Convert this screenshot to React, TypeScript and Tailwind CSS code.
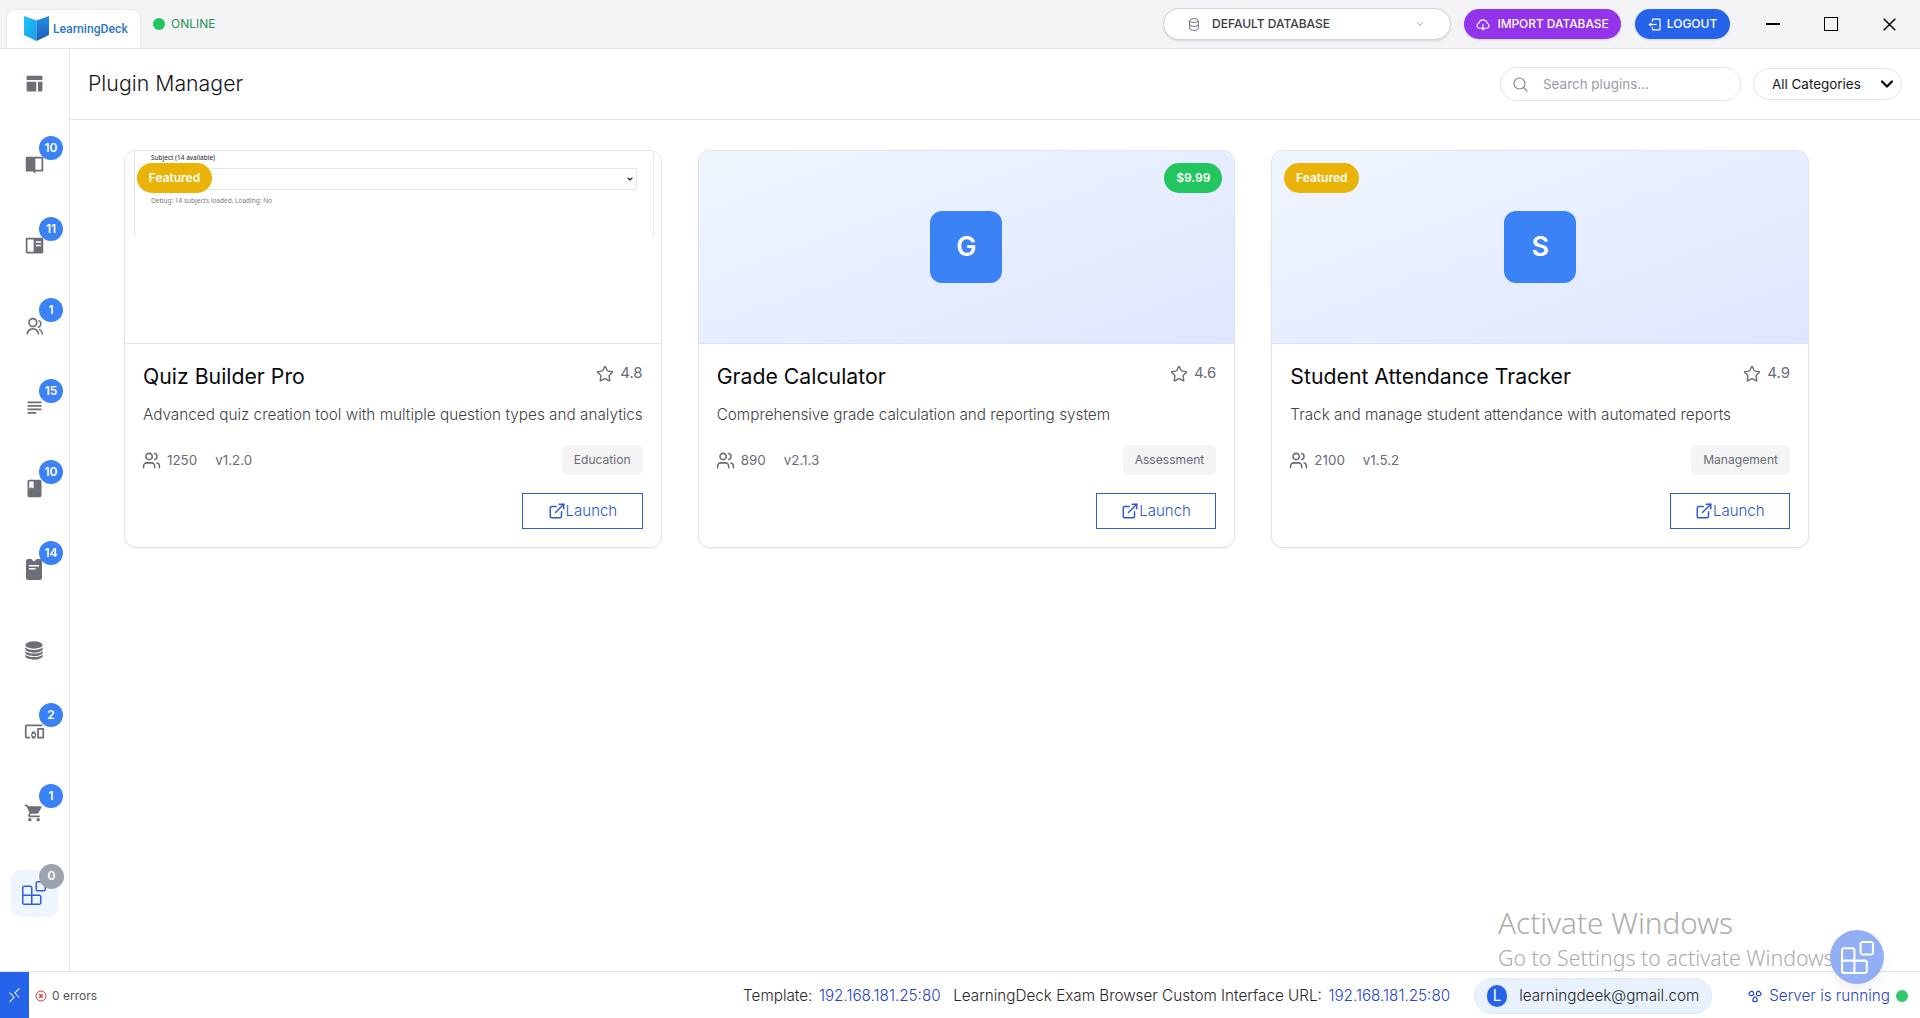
import type { ReactNode } from "react";
import { ChevronDown, ExternalLink, Star, Users } from "lucide-react";
import { RiGroupLine, RiLayoutFill } from "react-icons/ri";
import { MdClass, MdDevicesOther, MdShoppingCart, MdSubject } from "react-icons/md";
import { VscExtensions, VscRemote } from "react-icons/vsc";

function BookIcon() {
  return (
    <svg width="21" height="21" viewBox="0 0 24 24" fill="currentColor">
      <path d="M3 3h18a1 1 0 0 1 1 1v15a1 1 0 0 1-1 1h-7.500L12 22l-1.500-2H3a1 1 0 0 1-1-1V4a1 1 0 0 1 1-1zm10 2v13h7V5z" />
    </svg>
  );
}

function ReaderIcon() {
  return (
    <svg width="21" height="21" viewBox="0 0 24 24" fill="currentColor">
      <path
        fillRule="evenodd"
        d="M3.500 3h17A1.500 1.500 0 0 1 22 4.500v15a1.500 1.500 0 0 1-1.500 1.500h-17A1.500 1.500 0 0 1 2 19.500v-15A1.500 1.500 0 0 1 3.500 3zM4 5v14h7V5zm9.500 2v1.800h6V7zm0 4v1.800h6V11z"
      />
    </svg>
  );
}

function ClipboardIcon() {
  return (
    <svg width="16" height="21" viewBox="0 0 16 21" fill="currentColor">
      <path
        fillRule="evenodd"
        d="M2 0h3.500a2.600 2.600 0 0 0 5 0H14a2 2 0 0 1 2 2v17a2 2 0 0 1-2 2H2a2 2 0 0 1-2-2V2a2 2 0 0 1 2-2zM3 6v1.500h10V6zm0 3v1.500h6.500V9z"
      />
    </svg>
  );
}

function DatabaseStackIcon() {
  return (
    <svg width="18" height="19" viewBox="0 0 18 19" fill="currentColor">
      <ellipse cx="9" cy="4" rx="8.700" ry="3.700" />
      <path d="M.3 6.200C2 8.100 5.300 8.900 9 8.900s7-.8 8.700-2.700v1.900c0 2-3.900 3.700-8.700 3.700S.3 10.100.3 8.100z" />
      <path d="M.3 9.900c1.700 1.900 5 2.700 8.700 2.700s7-.8 8.700-2.700v1.600c0 2-3.900 3.700-8.700 3.700S.3 13.500.3 11.500z" />
      <path d="M.3 13.400c1.700 1.900 5 2.700 8.700 2.700s7-.8 8.700-2.700V15c0 2-3.900 3.700-8.700 3.700S.3 17 .3 15z" />
    </svg>
  );
}

function LogoMark() {
  return (
    <svg width="25" height="25" viewBox="0 0 25 25">
      <defs>
        <linearGradient id="pageLeft" x1="0" y1="0" x2="1" y2="1">
          <stop offset="0" stopColor="#1cc4f7" />
          <stop offset="1" stopColor="#1e9ae8" />
        </linearGradient>
        <linearGradient id="pageRight" x1="0" y1="0" x2="0" y2="1">
          <stop offset="0" stopColor="#2490e6" />
          <stop offset="1" stopColor="#1a5cb8" />
        </linearGradient>
      </defs>
      <path d="M0 0l12.500 4.500V25L0 19z" fill="url(#pageLeft)" />
      <path d="M25 0L12.500 4.500V25L25 19z" fill="url(#pageRight)" />
    </svg>
  );
}

function Cylinder() {
  return (
    <svg width="10" height="13" viewBox="0 0 10 13" fill="none" stroke="#6b7280" strokeWidth="1">
      <ellipse cx="5" cy="2.500" rx="4.300" ry="1.900" />
      <path d="M.7 2.500v8c0 1 1.900 1.900 4.300 1.900s4.300-.9 4.300-1.900v-8M.7 6.500c0 1 1.900 1.900 4.300 1.900s4.300-.9 4.300-1.900" />
    </svg>
  );
}

function CloudDown() {
  return (
    <svg className="mt-px" width="14" height="12" viewBox="0 0 14 12" fill="none" stroke="currentColor" strokeWidth="1.100" strokeLinecap="round" strokeLinejoin="round">
      <path d="M4 9.300H3.300a2.600 2.600 0 0 1-.4-5.100 4.200 4.200 0 0 1 8.200 0 2.600 2.600 0 0 1-.4 5.100H10" />
      <path d="M7 5.300v5.400M5.200 9L7 10.800 8.800 9" />
    </svg>
  );
}

function SignOut() {
  return (
    <svg className="mt-px" width="13" height="13" viewBox="0 0 13 13" fill="none" stroke="currentColor" strokeWidth="1.200" strokeLinejoin="round">
      <path d="M4.500 3.800V1.200h7.500v10.600H4.500V9.200" />
      <path d="M8.500 6.500H1.500" />
      <path d="M.3 6.500L3.400 4.200v4.600z" fill="currentColor" stroke="none" />
    </svg>
  );
}

function ClusterIcon() {
  return (
    <svg width="14" height="13" viewBox="0 0 14 13" fill="none" stroke="currentColor" strokeWidth="1.200" strokeLinejoin="round">
      <path d="M3.900 1.200C2.600 1.200.7 3.300.9 4.500s4 1.500 4.600.3S5 1.200 3.900 1.200z" />
      <path d="M10.100 1.200c1.300 0 3.200 2.100 3 3.300s-4 1.500-4.600.3.500-3.600 1.600-3.600z" />
      <path d="M7 6.900c-1 0-2.600 2.800-2.200 3.900s4 1.100 4.400 0S8 6.900 7 6.900z" />
    </svg>
  );
}

type NavItem = { icon: ReactNode; badge?: string; active?: boolean };

const nav: NavItem[] = [
  { icon: <RiLayoutFill size={21} className="mb-px" /> },
  { icon: <BookIcon />, badge: "10" },
  { icon: <ReaderIcon />, badge: "11" },
  { icon: <RiGroupLine size={19} />, badge: "1" },
  { icon: <MdSubject size={21} />, badge: "15" },
  { icon: <MdClass size={21} />, badge: "10" },
  { icon: <ClipboardIcon />, badge: "14" },
  { icon: <DatabaseStackIcon /> },
  { icon: <MdDevicesOther size={21} className="mt-px" />, badge: "2" },
  { icon: <MdShoppingCart size={20} className="mt-px" />, badge: "1" },
  { icon: <VscExtensions size={24} />, badge: "0", active: true },
];

function Sidebar() {
  return (
    <nav className="flex w-[70px] shrink-0 flex-col items-center gap-[33.930px] border-r border-[#e5e5e8] pt-[11.500px] text-[#6e6e79]">
      {nav.map((item, i) => (
        <div
          key={i}
          className={
            item.active
              ? "relative flex h-[47px] w-[47px] items-center justify-center rounded-[10px] bg-[#eff5fe] pr-[2px] text-[#2f5fd8]"
              : "relative flex h-[47px] w-[47px] items-center justify-center pr-px"
          }
        >
          {item.icon}
          {item.badge && (
            <span
              className={
                item.active
                  ? "absolute -top-[6px] -right-[6px] flex h-[25px] w-[25px] items-center justify-center rounded-full bg-[#9ca3af] text-[12px] font-semibold text-white"
                  : "absolute -top-[5px] -right-[5px] flex h-6 w-6 items-center justify-center rounded-full bg-[#3b82f6] text-[12px] font-semibold text-white"
              }
            >
              {item.badge}
            </span>
          )}
        </div>
      ))}
    </nav>
  );
}

function TitleBar() {
  return (
    <header className="flex h-[49px] shrink-0 border-b border-[#e2e2e5] bg-[#f4f4f6]">
      <div className="ml-[6px] flex h-[39px] w-[135px] items-center self-end rounded-t-[9px] border border-b-0 border-[#e5e7eb] bg-white pb-[2px] pl-[17px]">
        <LogoMark />
        <span className="mt-[2px] ml-[4px] font-['Roboto',sans-serif] text-[12.200px] font-medium text-[#2f78c0]">
          LearningDeck
        </span>
      </div>
      <div className="ml-3 flex items-center gap-[6px] text-[12px] font-normal text-[#2c9152]">
        <span className="h-3 w-3 rounded-full bg-[#22c55e]" />
        ONLINE
      </div>
      <div className="ml-auto flex items-center text-[12px] font-medium">
        <div className="flex h-8 w-[288px] items-center rounded-full border border-[#d1d3d9] bg-white pr-[25px] pl-[25px] text-[#3b3b45] shadow-sm">
          <Cylinder />
          <span className="ml-[13px] flex-1">DEFAULT DATABASE</span>
          <ChevronDown size={10} strokeWidth={2} className="text-[#8b8f98]" />
        </div>
        <button className="ml-[13px] flex h-[30px] w-[157px] items-center justify-center gap-[7px] rounded-full bg-[#9333ea] text-[11.900px] text-white shadow">
          <CloudDown />
          IMPORT DATABASE
        </button>
        <button className="ml-[14px] flex h-[30px] w-[95px] items-center justify-center gap-[6px] rounded-full bg-[#2563eb] text-white shadow">
          <SignOut />
          LOGOUT
        </button>
        <div className="ml-[36px] flex items-center pr-[24px]">
          <span className="h-[2px] w-[14px] bg-black" />
          <span className="ml-[44px] h-[14px] w-[14px] border-[1.500px] border-black" />
          <svg className="ml-[45px]" width="13" height="13" viewBox="0 0 13 13" stroke="#000" strokeWidth="1.500">
            <path d="M.7.7l11.600 11.600M12.300.7L.7 12.300" />
          </svg>
        </div>
      </div>
    </header>
  );
}

function PageHeader() {
  return (
    <div className="flex h-[71px] items-center border-b border-[#e5e5e8] pr-[18px] pl-[18px]">
      <h1 className="text-[21.300px] font-light text-[#18181b]">Plugin Manager</h1>
      <div className="ml-auto flex h-[34px] w-[241px] items-center rounded-full border border-[#e4e4e8] pl-[12px] text-[13.450px] text-[#9a9aa5]">
        <svg width="15" height="15" viewBox="0 0 15 15" fill="none" stroke="#85858f" strokeWidth="1.200" strokeLinecap="round">
          <circle cx="6.500" cy="6.500" r="5.500" />
          <path d="M10.500 10.500l3.700 3.700" />
        </svg>
        <span className="ml-[15px]">Search plugins...</span>
      </div>
      <div className="ml-3 flex h-8 w-[149px] items-center justify-between rounded-full border border-[#e4e4e8] pr-[4px] pl-[18px] text-[13.450px] text-[#18181b]">
        All Categories
        <ChevronDown size={20} strokeWidth={2.700} className="text-black" />
      </div>
    </div>
  );
}

type Plugin = {
  name: string;
  rating: string;
  description: string;
  users: string;
  version: string;
  category: string;
  featured?: boolean;
  price?: string;
  preview?: boolean;
};

const plugins: Plugin[] = [
  {
    name: "Quiz Builder Pro",
    rating: "4.8",
    description: "Advanced quiz creation tool with multiple question types and analytics",
    users: "1250",
    version: "v1.2.0",
    category: "Education",
    featured: true,
    preview: true,
  },
  {
    name: "Grade Calculator",
    rating: "4.6",
    description: "Comprehensive grade calculation and reporting system",
    users: "890",
    version: "v2.1.3",
    category: "Assessment",
    price: "$9.99",
  },
  {
    name: "Student Attendance Tracker",
    rating: "4.9",
    description: "Track and manage student attendance with automated reports",
    users: "2100",
    version: "v1.5.2",
    category: "Management",
    featured: true,
  },
];

function QuizPreview() {
  return (
    <div className="mr-[7px] ml-[9px] h-[88px] w-full self-start rounded-b-[6px] border-x border-b border-x-[#e8e8ec] border-b-transparent pr-[16px] pl-[16px] font-['Noto_Sans',sans-serif] text-[6.500px] leading-[10px]">
      <div className="pt-[2px] text-[#22222a]">Subject (14 available)</div>
      <div className="mt-[5px] flex h-[22px] items-center justify-end rounded-[3px] border border-[#e4e4e8] pr-[2px]">
        <ChevronDown size={8} strokeWidth={3.500} className="text-[#222]" />
      </div>
      <div className="mt-[6px] text-[#7d7d86]">Debug: 14 subjects loaded, Loading: No</div>
    </div>
  );
}

function PluginCard({ p }: { p: Plugin }) {
  return (
    <article className="overflow-hidden rounded-[12px] border border-[#e2e3e7] bg-white shadow-[0_1px_2px_rgba(0,0,0,0.05)]">
      <div
        className={
          p.preview
            ? "relative flex h-[193px] border-b border-[#e5e5e8] bg-white"
            : "relative flex h-[193px] items-center justify-center border-b border-[#e0e4f2] bg-gradient-to-br from-[#eff6ff] to-[#e0e6ff]"
        }
      >
        {p.preview ? (
          <QuizPreview />
        ) : (
          <div className="flex h-[72px] w-[72px] items-center justify-center rounded-[12px] bg-[#3b82f6] text-[27px] font-semibold text-white">
            {p.name[0]}
          </div>
        )}
        {p.featured && (
          <span className="absolute top-[12px] left-[12px] flex h-[30px] w-[75px] items-center justify-center rounded-full bg-[#eab308] text-[12px] font-semibold text-white">
            Featured
          </span>
        )}
        {p.price && (
          <span className="absolute top-[12px] right-[12px] flex h-[30px] w-[58px] items-center justify-center rounded-full bg-[#22c55e] text-[12px] font-semibold text-white">
            {p.price}
          </span>
        )}
      </div>
      <div className="px-[18px] pt-[17px] pb-[18px]">
        <div className="mb-3 flex items-start justify-between">
          <h3 className="pt-px text-[21.250px] leading-[29px] font-normal text-[#09090b]">{p.name}</h3>
          <div className="flex h-6 items-center gap-[6px] text-[15px] text-[#6b6b75]">
            <Star size={18} strokeWidth={1.900} className="mt-[2px]" />
            {p.rating}
          </div>
        </div>
        <p className="mb-[18px] text-[15.300px] leading-6 font-light whitespace-nowrap text-[#3f3f46]">{p.description}</p>
        <div className="mb-[18px] flex h-[30px] items-center text-[13.400px] text-[#6b6b75]">
          <Users size={19} strokeWidth={1.900} className="-ml-px" />
          <span className="mt-px ml-[6px]">{p.users}</span>
          <span className="mt-px ml-[18px]">{p.version}</span>
          <span className="ml-auto flex h-full items-center rounded-[6px] bg-[#f4f4f5] px-3 text-[12.100px]">
            {p.category}
          </span>
        </div>
        <div className="flex justify-end">
          <button className="flex h-9 w-[120.500px] items-center justify-center border border-[#2f5fc4] text-[15px] font-light text-[#2a55d4]">
            <ExternalLink size={18} strokeWidth={1.900} />
            Launch
          </button>
        </div>
      </div>
    </article>
  );
}

function StatusBar() {
  return (
    <footer className="flex h-[47px] shrink-0 items-center border-t border-[#e2e2e5] bg-white text-[15.250px] font-light whitespace-nowrap text-[#27272a]">
      <div className="flex h-full w-[29px] items-center justify-center bg-[#2563eb] text-white">
        <VscRemote size={17} />
      </div>
      <svg className="mt-px ml-[6px]" width="12" height="12" viewBox="0 0 12 12" fill="none" stroke="#dc3b3b" strokeWidth="1">
        <circle cx="6" cy="6" r="5" />
        <path d="M4.300 4.300l3.400 3.400M7.700 4.300L4.300 7.700" strokeWidth="1.400" />
      </svg>
      <span className="mt-px ml-[5px] text-[12px] font-normal text-[#52525b]">0 errors</span>
      <div className="ml-auto flex items-center pt-[2px]">
        <span>Template:</span>
        <span className="ml-[6.500px] text-[#1f45cc]">192.168.181.25:80</span>
        <span className="ml-[12.500px]">LearningDeck Exam Browser Custom Interface URL:</span>
        <span className="ml-[6.500px] text-[#1f45cc]">192.168.181.25:80</span>
      </div>
      <div className="mt-[2px] ml-[24px] flex h-9 w-[238px] items-center rounded-full border border-[#dfe9f6] bg-[#e8f1fc] pl-[12px]">
        <span className="flex h-[22px] w-5 items-center justify-center rounded-full bg-[#2563eb] font-normal text-white">L</span>
        <span className="ml-[12px]">learningdeek@gmail.com</span>
      </div>
      <div className="mt-[2px] ml-[36px] flex items-center pr-[12px] text-[#1f45cc]">
        <ClusterIcon />
        <span className="ml-[7px]">Server is running</span>
        <span className="ml-[6px] h-3 w-3 rounded-full bg-[#34c76f]" />
      </div>
    </footer>
  );
}

export default function App() {
  return (
    <div className="relative flex h-[1018px] w-[1920px] flex-col overflow-hidden bg-white font-['Inter',sans-serif]">
      <TitleBar />
      <div className="flex min-h-0 flex-1">
        <Sidebar />
        <main className="flex min-w-0 flex-1 flex-col">
          <PageHeader />
          <div className="grid grid-cols-3 gap-9 pt-[30px] pr-[111px] pl-[54px]">
            {plugins.map((p) => (
              <PluginCard key={p.name} p={p} />
            ))}
          </div>
        </main>
      </div>
      <StatusBar />
      <div className="absolute top-[902px] left-[1498px] font-['Noto_Sans',sans-serif] font-light whitespace-nowrap text-[#acacac]">
        <div className="text-[29.700px] leading-[42px]">Activate Windows</div>
        <div className="text-[21.350px] leading-[28px]">Go to Settings to activate Windows.</div>
      </div>
      <div className="absolute top-[930px] left-[1830px] flex h-[54px] w-[54px] items-center justify-center rounded-full bg-[#93aff3] text-white shadow-[0_6px_12px_rgba(0,0,0,0.06)]">
        <VscExtensions size={33} />
      </div>
    </div>
  );
}
